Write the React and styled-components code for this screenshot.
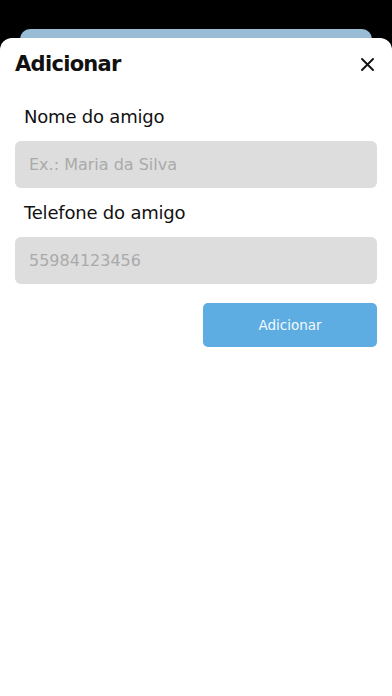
import React from 'react';
import styled, { createGlobalStyle } from 'styled-components';

const GlobalStyle = createGlobalStyle`
  html, body {
    margin: 0;
    padding: 0;
    background: #000;
  }
  * {
    box-sizing: border-box;
  }
`;

function CloseIcon() {
  return (
    <svg width="13" height="13" viewBox="0 0 13 13" fill="none">
      <path d="M1 1L12 12M12 1L1 12" stroke="#111" strokeWidth="1.9" strokeLinecap="round" />
    </svg>
  );
}

function Field({ label, placeholder, type }) {
  return (
    <FieldGroup>
      <Label>{label}</Label>
      <Input type={type} placeholder={placeholder} />
    </FieldGroup>
  );
}

export default function App() {
  return (
    <Page>
      <GlobalStyle />
      <BackCard />
      <Sheet>
        <Header>
          <Title>Adicionar</Title>
          <CloseButton aria-label="Fechar">
            <CloseIcon />
          </CloseButton>
        </Header>
        <Form>
          <Field label="Nome do amigo" placeholder="Ex.: Maria da Silva" type="text" />
          <Field label="Telefone do amigo" placeholder="55984123456" type="tel" />
          <Actions>
            <Button type="button">Adicionar</Button>
          </Actions>
        </Form>
      </Sheet>
    </Page>
  );
}

const Page = styled.div`
  display: flex;
  flex-direction: column;
  min-height: 696px;
  padding-top: 29px;
  background: #000;
  font-family: 'DejaVu Sans', 'Noto Sans', sans-serif;
`;

const BackCard = styled.div`
  height: 20px;
  margin: 0 20px -11px;
  background: #98bbd6;
  border-radius: 10px 10px 0 0;
`;

const Sheet = styled.section`
  position: relative;
  flex: 1;
  background: #fff;
  border-radius: 12px 12px 0 0;
  padding: 0 15px;
`;

const Header = styled.header`
  display: flex;
  align-items: center;
  justify-content: space-between;
  height: 52px;
`;

const Title = styled.h1`
  margin: 0;
  font-size: 21px;
  font-weight: 700;
  color: #111;
  letter-spacing: -0.7px;
`;

const CloseButton = styled.button`
  display: flex;
  align-items: center;
  justify-content: center;
  width: 24px;
  height: 24px;
  margin-right: -2px;
  padding: 0;
  border: none;
  background: none;
  cursor: pointer;
`;

const Form = styled.form`
  display: flex;
  flex-direction: column;
  padding-top: 16px;
`;

const FieldGroup = styled.div`
  display: flex;
  flex-direction: column;
  gap: 13px;
  margin-bottom: 14px;
`;

const Label = styled.label`
  padding-left: 9px;
  font-size: 18px;
  line-height: 22px;
  color: #111;
  letter-spacing: -0.2px;
`;

const Input = styled.input`
  height: 47px;
  padding: 0 14px;
  border: none;
  border-radius: 6px;
  background: #dddddd;
  font-family: inherit;
  font-size: 16px;
  color: #333;
  outline: none;

  &::placeholder {
    color: #aaaaaa;
  }
`;

const Actions = styled.div`
  display: flex;
  justify-content: flex-end;
  padding-top: 5px;
`;

const Button = styled.button`
  width: 174px;
  height: 44px;
  border: none;
  border-radius: 5px;
  background: #5dade2;
  color: #f4f9fd;
  font-family: inherit;
  font-size: 13.5px;
  cursor: pointer;
`;
